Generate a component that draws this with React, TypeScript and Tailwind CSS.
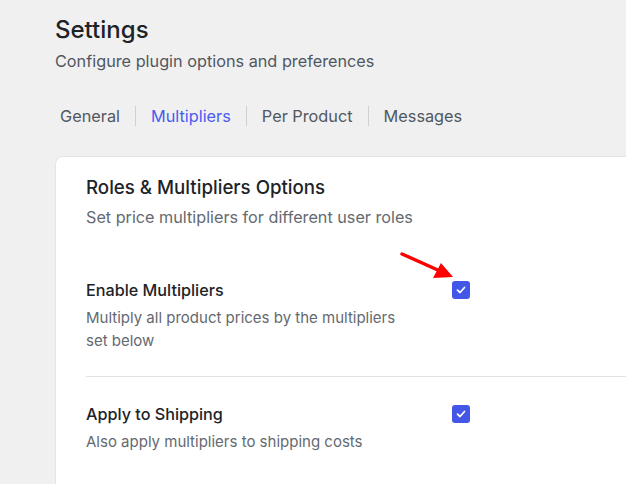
import React from "react";

function Check() {
  return (
    <div className="w-[18px] h-[18px] rounded-[3px] bg-[#4456e8] flex items-center justify-center">
      <svg width="12" height="12" viewBox="0 0 12 12" fill="none">
        <path d="M2.5 6.2 L5 8.5 L9.5 3.5" stroke="white" strokeWidth="1.7" strokeLinecap="round" strokeLinejoin="round" />
      </svg>
    </div>
  );
}

export default function App() {
  const tabs = ["General", "Multipliers", "Per Product", "Messages"];
  return (
    <div className="relative w-[626px] h-[484px] overflow-hidden bg-[#f0f0f1] font-['Inter',sans-serif]">
      <div className="pl-[55px] pt-[14px]">
        <h1 className="text-[24px] leading-[32px] font-medium text-[#1d2327]">Settings</h1>
        <p className="mt-[3px] text-[16.25px] leading-[24px] text-[#50575e]">Configure plugin options and preferences</p>
        <div className="mt-[31px] flex items-center text-[16.3px] leading-[24px] pl-[5px]">
          {tabs.map((t, i) => (
            <React.Fragment key={t}>
              {i > 0 && <span className="mx-[15px] w-px h-[20px] bg-[#d0d0d3]" />}
              <span className={i === 1 ? "text-[#4a5bf0]" : "text-[#50575e]"}>{t}</span>
            </React.Fragment>
          ))}
        </div>
        <div className="mt-[28px] w-[620px] h-[400px] bg-white rounded-[8px] border border-[#e4e4e7] pl-[30px] pt-[19px]">
          <h2 className="text-[18.7px] leading-[24px] font-medium text-[#1d2327]">Roles &amp; Multipliers Options</h2>
          <p className="mt-[6px] text-[16.2px] leading-[22px] text-[#646970]">Set price multipliers for different user roles</p>
          <div className="mt-[51px] grid grid-cols-[366px_1fr]">
            <div>
              <div className="text-[16.2px] leading-[22px] font-medium text-[#1d2327]">Enable Multipliers</div>
              <div className="mt-[5px] w-[330px] text-[15px] leading-[23px] text-[#646970]">Multiply all product prices by the multipliers set below</div>
            </div>
            <div className="pt-[2px]"><Check /></div>
          </div>
          <div className="mt-[24px] h-px bg-[#e2e2e4]" />
          <div className="mt-[26px] grid grid-cols-[366px_1fr]">
            <div>
              <div className="text-[16.2px] leading-[22px] font-medium text-[#1d2327]">Apply to Shipping</div>
              <div className="mt-[5px] text-[15px] leading-[23px] text-[#646970]">Also apply multipliers to shipping costs</div>
            </div>
            <div className="pt-[2px]"><Check /></div>
          </div>
        </div>
      </div>
      <svg className="absolute left-0 top-0 pointer-events-none" width="626" height="484">
        <line x1="402" y1="254" x2="440" y2="271" stroke="#ff0000" strokeWidth="3.5" strokeLinecap="round" />
        <polygon points="453,277 433,278 441,263" fill="#ff0000" />
      </svg>
    </div>
  );
}
